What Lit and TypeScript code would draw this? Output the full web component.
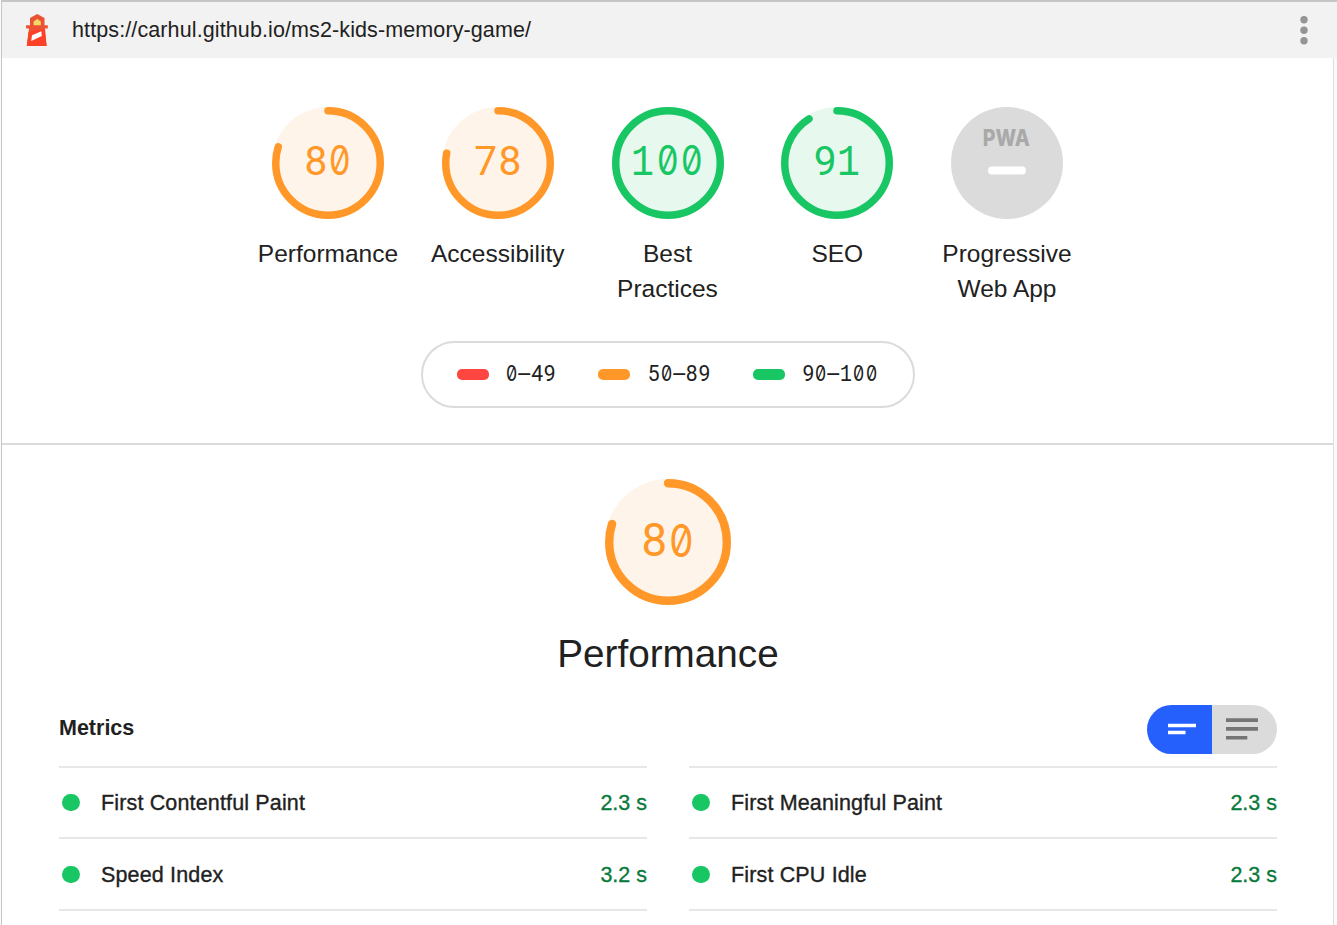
import { LitElement, html, svg, css } from "lit";
import { customElement, property } from "lit/decorators.js";
import { styleMap } from "lit/directives/style-map.js";

type Rating = "pass" | "average" | "fail";

const glyphClass = (c: string) =>
  c === "0" ? "ch zero" : c === "1" ? "ch one" : c === "–" ? "ch dash" : "ch";

/** Fixed-pitch digits with a slashed zero. */
@customElement("mono-text")
export class MonoText extends LitElement {
  @property() text = "";
  static styles = css`
    :host {
      display: inline-flex;
      font-family: Roboto, "Liberation Sans", sans-serif;
      line-height: 1;
    }
    .ch {
      display: flex;
      justify-content: center;
      width: 0.6em;
      height: 1em;
      line-height: 1em;
    }
    .ch span {
      display: block;
      transform: scaleY(1.02);
    }
    .zero {
      font-family: Inter, "DejaVu Sans Mono", monospace;
      font-feature-settings: "zero" 1;
    }
    .one,
    .dash {
      font-family: "Liberation Mono", monospace;
    }
    .zero span {
      transform: translateY(-0.008em) scaleX(0.84);
    }
    .one span {
      transform: translate(-0.02em, 0.05em) scale(0.94, 1.1);
    }
    .dash span {
      transform: translateY(0.05em) scale(1.3, 1.2);
    }
  `;
  render() {
    return html`${[...this.text].map(
      (c) => html`<span class=${glyphClass(c)}><span>${c}</span></span>`
    )}`;
  }
}

@customElement("score-gauge")
export class ScoreGauge extends LitElement {
  @property({ type: Number }) score = 0;
  @property({ reflect: true }) rating: Rating = "pass";
  static styles = css`
    :host {
      display: grid;
      place-items: center;
      color: #18c664;
      --fill: #e7f8ee;
      width: var(--size, 112px);
      height: var(--size, 112px);
      font-size: var(--digits, 40.6px);
    }
    :host([rating="average"]) {
      color: #ff9829;
      --fill: #fff4ea;
    }
    svg,
    mono-text {
      grid-area: 1 / 1;
    }
    svg {
      display: block;
      width: 100%;
      height: 100%;
    }
    mono-text {
      margin-top: var(--lift, -3px);
    }
    .base {
      fill: var(--fill);
    }
    .arc {
      fill: none;
      stroke: currentColor;
      stroke-width: 8;
      stroke-linecap: round;
    }
  `;
  render() {
    return html`<svg viewBox="0 0 120 120">
        <circle class="base" cx="60" cy="60" r="60"></circle>
        <circle
          class="arc"
          cx="60"
          cy="60"
          r="56"
          pathLength="100"
          stroke-dasharray="${this.score} 100"
          transform="rotate(-90 60 60)"
        ></circle>
      </svg>
      <mono-text .text=${String(this.score)}></mono-text>`;
  }
}

const categories: { score: number; rating: Rating; label: string }[] = [
  { score: 80, rating: "average", label: "Performance" },
  { score: 78, rating: "average", label: "Accessibility" },
  { score: 100, rating: "pass", label: "Best Practices" },
  { score: 91, rating: "pass", label: "SEO" },
];

const legend = [
  { color: "#ff4640", range: "0–49" },
  { color: "#ff9829", range: "50–89" },
  { color: "#18c664", range: "90–100" },
];

const metrics = [
  ["First Contentful Paint", "2.3 s"],
  ["First Meaningful Paint", "2.3 s"],
  ["Speed Index", "3.2 s"],
  ["First CPU Idle", "2.3 s"],
];

const lighthouse = svg`
  <path fill="#eb5233" d="M11.2 0 18.5 4v7.2h3.3v3.2h-3.3L20.6 32H.8L3 14.4H.1v-3.2H4V4z"/>
  <path fill="#fb4127" d="M2.6 18 19 14.4 20.6 32H.8z"/>
  <path fill="#f3d967" d="M7.6 11.2V7.4l3.6-2.5 3.6 2.5v3.8z"/>
  <path fill="#fff" d="m6 21.2 9.4-4 .4 4.8L5.2 27z"/>`;

@customElement("app-root")
export class AppRoot extends LitElement {
  static styles = css`
    :host {
      display: flex;
      height: 925px;
      box-sizing: border-box;
      padding-left: 1px;
      overflow: hidden;
      background: #fbfbfb;
      color: #212121;
      font: 21px/1 "Liberation Sans", Arial, sans-serif;
    }
    .window {
      flex: 1;
      border-left: 1px solid #c6c6c6;
    }
    .topbar {
      display: flex;
      align-items: center;
      height: 58px;
      box-sizing: border-box;
      border-top: 2px solid #c6c6c6;
      background: #f2f2f2;
      padding: 0 29px 0 24px;
    }
    .logo {
      width: 22px;
      height: 32px;
      margin-right: 24px;
    }
    .url {
      flex: 1;
      font-size: 21.5px;
      line-height: 26px;
      letter-spacing: 0.11px;
    }
    .menu {
      width: 8px;
      height: 29px;
      fill: #959595;
    }
    .page {
      width: 1331px;
      height: 867px;
      background: #fff;
      border-right: 1px solid #dedede;
    }
    .summary {
      display: flex;
      flex-direction: column;
      align-items: center;
      height: 336px;
      padding-top: 49px;
      border-bottom: 2px solid #dbdbdb;
    }
    .scores {
      display: grid;
      grid-template-columns: repeat(5, 169.75px);
      height: 234px;
    }
    .category {
      display: flex;
      flex-direction: column;
      align-items: center;
      gap: 17px;
    }
    .label {
      width: 144px;
      text-align: center;
      font-size: 24.5px;
      line-height: 35px;
    }
    .pwa {
      display: block;
      width: 112px;
      height: 112px;
    }
    .pwa text {
      font: 800 23.5px Inter, sans-serif;
      fill: #a9a9a9;
    }
    .legend {
      display: flex;
      align-items: center;
      gap: 42.3px;
      height: 63px;
      width: 422px;
      padding: 0 34px;
      border: 2px solid #dbdbdb;
      border-radius: 34px;
    }
    .range {
      display: flex;
      align-items: center;
      gap: 17px;
      color: #212121;
    }
    .range mono-text {
      font-size: 21.1px;
      margin-top: -1px;
    }
    .swatch {
      width: 32px;
      height: 11px;
      border-radius: 5px;
    }
    .detail {
      display: flex;
      flex-direction: column;
      padding: 34px 56px 0 57px;
    }
    .big {
      --size: 126px;
      --digits: 45.6px;
      --lift: -2px;
      align-self: center;
    }
    .title {
      align-self: center;
      font-size: 38.7px;
      line-height: 46px;
      margin: 26px 0 28px;
      font-weight: 400;
    }
    .heading {
      display: flex;
      justify-content: space-between;
      height: 49px;
      margin-bottom: 12px;
    }
    .heading-text {
      margin: 0;
      font-size: 21.5px;
      line-height: 46px;
    }
    .toggle {
      display: flex;
      border-radius: 25px;
      overflow: hidden;
    }
    .option {
      width: 65px;
      height: 49px;
      background: #dbdbdb;
      fill: #757575;
    }
    .option.on {
      background: #255ffc;
      fill: #fff;
    }
    .metrics {
      display: grid;
      grid-template-columns: 588px 588px;
      column-gap: 42px;
      grid-template-rows: 71px 72px 2px;
    }
    .metric {
      display: flex;
      align-items: center;
      border-top: 2px solid #e7e7e7;
      padding-left: 3px;
      font-size: 21.5px;
      -webkit-text-stroke: 0.35px currentColor;
      letter-spacing: 0.15px;
    }
    .dot {
      width: 18px;
      height: 17px;
      border-radius: 9px;
      background: #18c664;
      margin-right: 21px;
    }
    .name,
    .value {
      line-height: 25px;
      padding-top: 2px;
    }
    .name {
      flex: 1;
    }
    .value {
      color: #0a7a3c;
      letter-spacing: 0;
    }
    .rule {
      background: #e7e7e7;
    }
  `;

  render() {
    return html`<div class="window">
      <header class="topbar">
        <svg class="logo" viewBox="0 0 22 32">${lighthouse}</svg>
        <span class="url">https://carhul.github.io/ms2-kids-memory-game/</span>
        <svg class="menu" viewBox="0 0 8 29">
          <circle cx="4" cy="3.7" r="3.7"></circle>
          <circle cx="4" cy="14.2" r="3.7"></circle>
          <circle cx="4" cy="24.7" r="3.7"></circle>
        </svg>
      </header>
      <main class="page">
        <section class="summary">
          <div class="scores">
            ${categories.map(
              (c) => html`<div class="category">
                <score-gauge .score=${c.score} rating=${c.rating}></score-gauge>
                <div class="label">${c.label}</div>
              </div>`
            )}
            <div class="category">
              <svg class="pwa" viewBox="0 0 112 112">
                <circle cx="56" cy="56" r="56" fill="#dbdbdb"></circle>
                <text x="31.7" y="39.2" textLength="47" lengthAdjust="spacingAndGlyphs">PWA</text>
                <rect x="37" y="59.5" width="38" height="8" rx="4" fill="#fff"></rect>
              </svg>
              <div class="label">Progressive Web App</div>
            </div>
          </div>
          <div class="legend">
            ${legend.map(
              (l) => html`<div class="range">
                <span class="swatch" style=${styleMap({ background: l.color })}></span>
                <mono-text .text=${l.range}></mono-text>
              </div>`
            )}
          </div>
        </section>
        <section class="detail">
          <score-gauge class="big" .score=${80} rating="average"></score-gauge>
          <h1 class="title">Performance</h1>
          <div class="heading">
            <h2 class="heading-text">Metrics</h2>
            <div class="toggle">
              <svg class="option on" viewBox="0 0 65 49">
                <path d="M21 18.7h28v3.6H21zM21 25.7h17.5v3.6H21z"></path>
              </svg>
              <svg class="option" viewBox="0 0 65 49">
                <path d="M14 13.3h32v3.6H14zM14 22.1h32v3.6H14zM14 30.9h21.3v3.6H14z"></path>
              </svg>
            </div>
          </div>
          <div class="metrics">
            ${metrics.map(
              ([name, value]) => html`<div class="metric">
                <span class="dot"></span>
                <span class="name">${name}</span>
                <span class="value">${value}</span>
              </div>`
            )}
            <div class="rule"></div>
            <div class="rule"></div>
          </div>
        </section>
      </main>
    </div>`;
  }
}
